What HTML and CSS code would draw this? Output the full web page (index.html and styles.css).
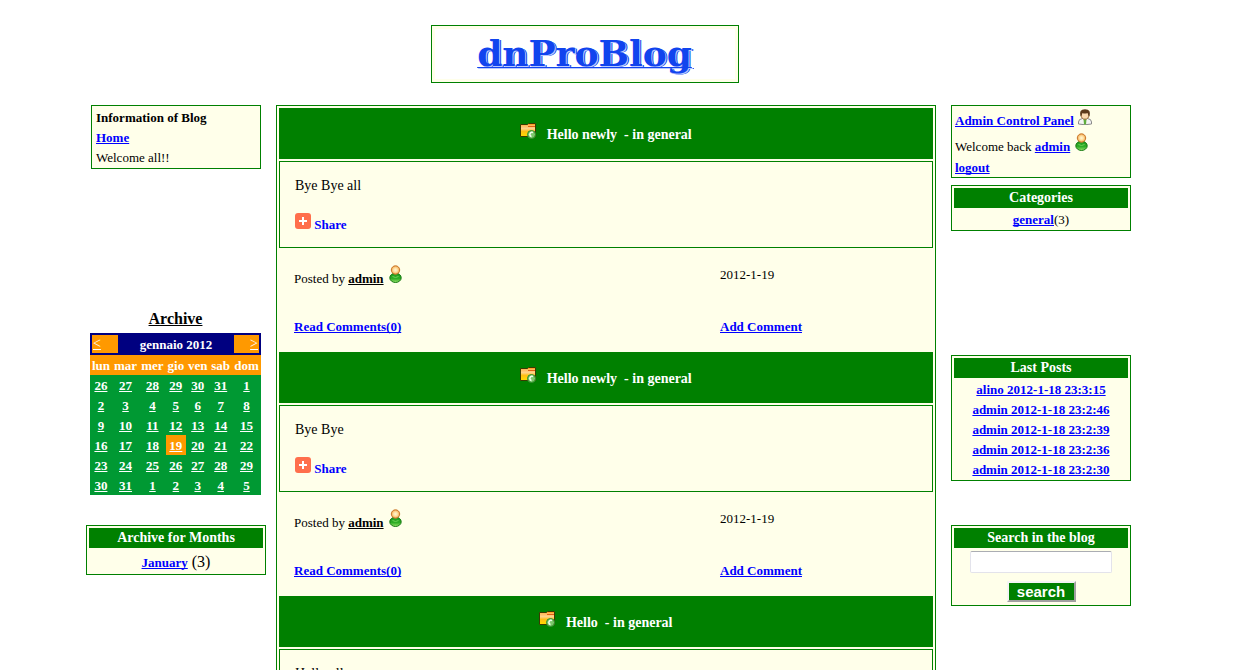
FILE: index.html
```html
<!DOCTYPE html>
<html lang="en">
<head>
<meta charset="utf-8">
<title>dnProBlog</title>
<link rel="stylesheet" href="styles.css">
</head>
<body>
<svg class="defs" width="0" height="0" aria-hidden="true">
  <defs>
    <linearGradient id="gold" x1="0" y1="0" x2="0" y2="1"><stop offset="0" stop-color="#ffa63c"/><stop offset=".4" stop-color="#ffd48c"/><stop offset=".6" stop-color="#ffbe14"/><stop offset="1" stop-color="#ffdc00"/></linearGradient>
    <radialGradient id="skin"><stop offset="0" stop-color="#fff6d8"/><stop offset=".5" stop-color="#ffdf9c"/><stop offset="1" stop-color="#f0a04c"/></radialGradient>
    <linearGradient id="leaf" x1="0" y1="0" x2="0" y2="1"><stop offset="0" stop-color="#1f9a1f"/><stop offset=".6" stop-color="#2fae26"/><stop offset="1" stop-color="#9be36c"/></linearGradient>
    <symbol id="folder" viewBox="0 0 16 16">
      <path d="M.5 1.500h7l1-1h7v13H.5z" fill="url(#gold)" stroke="#3a3a00"/>
      <path d="M8 1.500h7" stroke="#ffa028"/>
      <path d="M8 3.500h7" stroke="#e06010"/>
      <circle cx="11.500" cy="11.500" r="4" fill="#7cc86c" stroke="#2f8a2a"/>
      <path d="M13 9.500c-3-1-4.500 3-1.500 4" fill="none" stroke="#effff0" stroke-width="1.500"/>
    </symbol>
    <symbol id="user" viewBox="0 0 16 18">
      <ellipse cx="8.500" cy="12.800" rx="5.700" ry="4.700" fill="url(#leaf)" stroke="#13780f"/>
      <path d="M5.500 11.500q3 2 6 0" fill="none" stroke="#6fd058"/>
      <circle cx="8.500" cy="5" r="4.200" fill="url(#skin)" stroke="#c8782a"/>
    </symbol>
    <symbol id="staff" viewBox="0 0 16 16">
      <path d="M1.500 15v-2q0-3 4-3.500h5q4 .5 4 3.500v2q-6.500 1.500-13 0z" fill="#f4f4f4" stroke="#8a8a8a"/>
      <path d="M6.500 10h3l-.5 5.500H7z" fill="#5fae3c"/>
      <ellipse cx="8" cy="6" rx="3.800" ry="4.200" fill="#fbd9b0" stroke="#9b6a3c"/>
      <path d="M3.500 7.500Q1.500.2 8 .2t4.500 7.300l-1-1-1-2.500q-3 1-5 0L4.500 6.500z" fill="#5d3a1c"/>
    </symbol>
    <symbol id="plus" viewBox="0 0 16 16">
      <rect width="16" height="16" rx="3" fill="#ff6f4c"/>
      <path d="M8 4v8M4 8h8" stroke="#fff" stroke-width="2"/>
    </symbol>
  </defs>
</svg>
<div class="page">
  <header class="banner"><a class="logo" href="#">dnProBlog</a></header>
  <div class="columns">
    <aside class="side side-left">
      <section class="panel info">
        <strong>Information of Blog</strong>
        <a href="#">Home</a>
        <span>Welcome all!!</span>
      </section>
      <section class="archive">
        <h2>Archive</h2>
        <div class="cal-title"><a href="#">&lt;</a><span>gennaio 2012</span><a class="next" href="#">&gt;</a></div>
        <table class="calendar">
          <thead><tr><th>lun</th><th>mar</th><th>mer</th><th>gio</th><th>ven</th><th>sab</th><th>dom</th></tr></thead>
          <tbody>
            <tr><td><a href="#">26</a></td><td><a href="#">27</a></td><td><a href="#">28</a></td><td><a href="#">29</a></td><td><a href="#">30</a></td><td><a href="#">31</a></td><td><a href="#">1</a></td></tr>
            <tr><td><a href="#">2</a></td><td><a href="#">3</a></td><td><a href="#">4</a></td><td><a href="#">5</a></td><td><a href="#">6</a></td><td><a href="#">7</a></td><td><a href="#">8</a></td></tr>
            <tr><td><a href="#">9</a></td><td><a href="#">10</a></td><td><a href="#">11</a></td><td><a href="#">12</a></td><td><a href="#">13</a></td><td><a href="#">14</a></td><td><a href="#">15</a></td></tr>
            <tr><td><a href="#">16</a></td><td><a href="#">17</a></td><td><a href="#">18</a></td><td class="today"><a href="#">19</a></td><td><a href="#">20</a></td><td><a href="#">21</a></td><td><a href="#">22</a></td></tr>
            <tr><td><a href="#">23</a></td><td><a href="#">24</a></td><td><a href="#">25</a></td><td><a href="#">26</a></td><td><a href="#">27</a></td><td><a href="#">28</a></td><td><a href="#">29</a></td></tr>
            <tr><td><a href="#">30</a></td><td><a href="#">31</a></td><td><a href="#">1</a></td><td><a href="#">2</a></td><td><a href="#">3</a></td><td><a href="#">4</a></td><td><a href="#">5</a></td></tr>
          </tbody>
        </table>
      </section>
      <section class="panel listing months">
        <h3>Archive for Months</h3>
        <p><a href="#">January</a> (3)</p>
      </section>
    </aside>
    <main class="posts">
      <article class="post">
        <h2><svg class="icon"><use href="#folder"/></svg>&nbsp;&nbsp; Hello newly &nbsp;- in general</h2>
        <div class="body"><p>Bye Bye all</p><a class="share" href="#"><svg class="icon"><use href="#plus"/></svg> Share</a></div>
        <footer class="meta">
          <span>Posted by <a class="author" href="#">admin</a> <svg class="icon user"><use href="#user"/></svg></span><span>2012-1-19</span>
          <a href="#">Read Comments(0)</a><a href="#">Add Comment</a>
        </footer>
      </article>
      <article class="post">
        <h2><svg class="icon"><use href="#folder"/></svg>&nbsp;&nbsp; Hello newly &nbsp;- in general</h2>
        <div class="body"><p>Bye Bye</p><a class="share" href="#"><svg class="icon"><use href="#plus"/></svg> Share</a></div>
        <footer class="meta">
          <span>Posted by <a class="author" href="#">admin</a> <svg class="icon user"><use href="#user"/></svg></span><span>2012-1-19</span>
          <a href="#">Read Comments(0)</a><a href="#">Add Comment</a>
        </footer>
      </article>
      <article class="post">
        <h2><svg class="icon"><use href="#folder"/></svg>&nbsp;&nbsp; Hello &nbsp;- in general</h2>
        <div class="body"><p>Hello all</p></div>
      </article>
    </main>
    <aside class="side side-right">
      <div class="slot-top">
        <section class="panel account">
          <span><a href="#">Admin Control Panel</a> <svg class="icon"><use href="#staff"/></svg></span>
          <span>Welcome back <a href="#">admin</a> <svg class="icon user"><use href="#user"/></svg></span>
          <a class="logout" href="#">logout</a>
        </section>
        <section class="panel listing">
          <h3>Categories</h3>
          <p><a href="#">general</a>(3)</p>
        </section>
      </div>
      <section class="panel listing">
        <h3>Last Posts</h3>
        <p><a href="#">alino 2012-1-18 23:3:15</a></p>
        <p><a href="#">admin 2012-1-18 23:2:46</a></p>
        <p><a href="#">admin 2012-1-18 23:2:39</a></p>
        <p><a href="#">admin 2012-1-18 23:2:36</a></p>
        <p><a href="#">admin 2012-1-18 23:2:30</a></p>
      </section>
      <form class="panel listing search">
        <h3><label for="q">Search in the blog</label></h3>
        <input id="q" type="text">
        <button type="button">search</button>
      </form>
    </aside>
  </div>
</div>
</body>
</html>
```
FILE: styles.css
```css
* { box-sizing: border-box; }
html { overflow: hidden; }
body {
  margin: 0;
  padding: 25px 36px 0 0;
  background: #fff;
  color: #000;
  font: 13px/20px "Liberation Serif", "Times New Roman", serif;
}
h2, h3, p { margin: 0; }
a { color: #00f; font-weight: bold; text-decoration-skip-ink: none; }
.defs { position: absolute; }
.page { max-width: 1045px; margin: 0 auto; }

.banner {
  width: 308px;
  margin-bottom: 22px;
  margin-left: calc(50% - 178px);
  padding: 10px 0;
  border: 1px solid #008000;
  box-shadow: inset 0 0 0 3px #ffffea;
  text-align: center;
}
.logo {
  font: bold 36px/34px "DejaVu Serif", serif;
  color: #1144ee;
  text-shadow: 1px 1px 0 #b9c9ff, 2px 1px 0 #1144ee;
  text-decoration-thickness: 1px;
}

.columns { display: grid; grid-template-columns: 180px minmax(0, 1fr) 180px; align-items: start; }
.side { display: grid; }
.panel { border: 1px solid #008000; background: #ffffea; }
.icon { width: 16px; height: 16px; }
.user { height: 18px; }

.side-left { grid-template-rows: 204px 216px auto; }
.side-right { grid-template-rows: 250px 170px auto; align-items: start; }
.info { width: 170px; align-self: start; justify-self: center; display: grid; justify-items: start; padding: 2px 4px 0; }
.archive { width: 171px; margin-left: 4px; }
.archive h2 { font-size: 16px; line-height: 20px; padding-bottom: 4px; text-align: center; text-decoration: underline; }
.cal-title {
  display: grid;
  grid-template-columns: 26px 1fr 25px;
  padding: 2px;
  background: #000080;
  color: #fff;
  font-weight: bold;
  line-height: 18px;
  text-align: center;
}
.cal-title span { padding-top: 1px; line-height: 17px; }
.cal-title a { background: #ff9900; color: #fff; padding: 0 1px; text-align: left; font-weight: normal; font-size: 14px; }
.cal-title .next { text-align: right; }
.calendar { width: 100%; border-collapse: collapse; background: #009933; text-align: center; color: #fff; }
.calendar th, .calendar td { height: 20px; padding: 2px 2px 0; line-height: 18px; }
.calendar th { padding: 2px 1px 0; background: #ff9900; }
.calendar a { color: #fff; }
.calendar .today { background: #ff9900; }

.listing { padding: 2px 2px 0; text-align: center; }
.listing h3 { background: #008000; color: #fff; font-size: 14px; line-height: 20px; margin-bottom: 2px; }
.months p { font-size: 16px; line-height: 23px; }
.months a { font-size: 13px; }

.slot-top { display: grid; gap: 7px; }
.account { display: grid; justify-items: start; padding: 3px 3px 0; }
.account span { line-height: 24px; }
.account .logout { line-height: 18px; }

.search { display: grid; justify-items: center; }
.search h3 { width: 100%; }
.search input {
  width: 142px;
  height: 22px;
  border: 1px solid #e3e3eb;
  border-top-color: #abadb3;
  border-radius: 2px;
  background: #fff;
  margin: 1px 0 8px;
}
.search button {
  width: 69px;
  height: 21px;
  margin-bottom: 3px;
  padding: 0;
  border: 2px solid;
  border-color: #f4f4f4 #a0a0a0 #a0a0a0 #f4f4f4;
  background: #008000;
  color: #fff;
  font: bold 15px/15px "Liberation Sans", Arial, sans-serif;
}

.posts { margin: 0 15px 0 10px; padding: 2px; border: 1px solid #008000; background: #ffffea; }
.post h2 { background: #008000; color: #fff; font-size: 14px; line-height: 19px; padding: 15px 0; margin-bottom: 2px; text-align: center; }
.body { border: 1px solid #008000; padding: 14px 15px; height: 87px; font-size: 14px; line-height: 20px; }
.body p { margin-bottom: 17px; }
.share { font-size: 13px; text-decoration: none; }
.share .icon { vertical-align: 0; }
.meta { display: grid; grid-template-columns: 2fr 1fr; padding: 17px 0 14px 15px; row-gap: 26px; min-height: 104px; justify-items: start; align-items: start; }
.author { color: #000; }
```
